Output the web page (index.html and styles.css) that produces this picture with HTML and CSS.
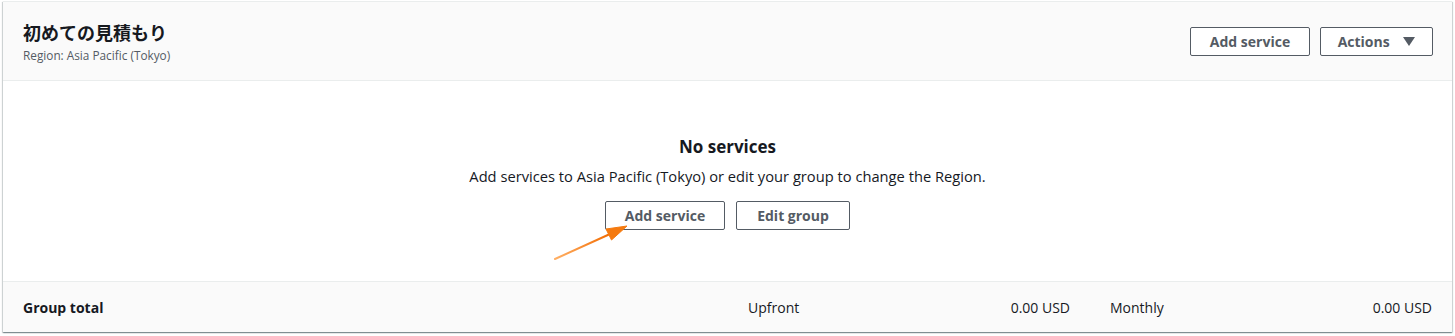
FILE: index.html
```html
<!DOCTYPE html>
<html lang="ja">
<head>
	<meta charset="UTF-8">
	<title>初めての見積もり</title>
	<link rel="stylesheet" href="styles.css">
</head>
<body>
	<section class="group">
		<div class="group-head">
			<div class="head-txt">
				<h2>初めての見積もり</h2>
				<p>Region: Asia Pacific (Tokyo)</p>
			</div>
			<div class="head-btns">
				<button class="btn">Add service</button>
				<button class="btn btn-drop">Actions <span class="caret"></span></button>
			</div>
		</div>
		<div class="group-body">
			<h3>No services</h3>
			<p>Add services to Asia Pacific (Tokyo) or edit your group to change the Region.</p>
			<div class="body-btns">
				<button class="btn">Add service</button>
				<button class="btn">Edit group</button>
			</div>
			<svg class="arrow" width="90" height="50" viewBox="0 0 90 50">
				<defs>
					<linearGradient id="ag" x1="0" y1="1" x2="1" y2="0">
						<stop offset="0" stop-color="#ffb066"/>
						<stop offset="1" stop-color="#f26b00"/>
					</linearGradient>
				</defs>
				<path d="M6 40 L61 15" stroke="url(#ag)" stroke-width="2" stroke-linecap="round" fill="none"/>
				<path d="M78 7 L57 10 L62.5 21 Z" fill="#f57a0f" stroke="#f57a0f" stroke-width="1" stroke-linejoin="round"/>
			</svg>
		</div>
		<div class="group-foot">
			<div class="foot-name">Group total</div>
			<div class="foot-col"><span>Upfront</span><span>0.00 USD</span></div>
			<div class="foot-col"><span>Monthly</span><span>0.00 USD</span></div>
		</div>
	</section>
</body>
</html>
```

FILE: styles.css
```css
body{
	margin:0;
	padding:1px 3px 3px 3px;
	background:#fff;
	font-family:"Open Sans","Noto Sans CJK JP",sans-serif;
	color:#16191f;
}
h2,h3,p{
	margin:0;
}
.group{
	background:#fff;
	box-shadow:0 1px 1px 0 rgba(0,28,36,.3),1px 1px 1px 0 rgba(0,28,36,.15),-1px 1px 1px 0 rgba(0,28,36,.15);
	border-top:1px solid #eaeded;
}
.group-head{
	display:flex;
	justify-content:space-between;
	align-items:center;
	height:78px;
	padding:0 19px 0 20px;
	background:#fafafa;
	border-bottom:1px solid #eaeded;
}
.head-txt h2{
	font-family:"Noto Sans CJK JP",sans-serif;
	font-size:18px;
	font-weight:700;
	line-height:24px;
	color:#16191f;
}
.head-txt p{
	margin-top:3px;
	font-size:11.8px;
	line-height:16px;
	color:#545b64;
}
.head-btns{
	display:flex;
	gap:10px;
	margin-top:1px;
}
.btn{
	height:29px;
	padding:0;
	border:1px solid #545b64;
	border-radius:2px;
	background:#fff;
	font-family:"Open Sans",sans-serif;
	font-size:14px;
	font-weight:700;
	color:#545b64;
	white-space:nowrap;
	cursor:pointer;
}
.head-btns .btn{
	width:120px;
}
.head-btns .btn-drop{
	width:113px;
}
.caret{
	display:inline-block;
	margin-left:10px;
	width:0;
	height:0;
	border-left:6px solid transparent;
	border-right:6px solid transparent;
	border-top:9px solid #545b64;
	vertical-align:1px;
}
.group-body{
	position:relative;
	height:200px;
	text-align:center;
	border-bottom:1px solid #eaeded;
}
.group-body h3{
	padding-top:55px;
	font-size:17px;
	font-weight:700;
	line-height:22px;
}
.group-body p{
	margin-top:8px;
	font-size:14.7px;
	line-height:20px;
}
.body-btns{
	display:flex;
	justify-content:center;
	gap:11px;
	margin-top:15px;
}
.body-btns .btn:first-child{
	width:120px;
}
.body-btns .btn:last-child{
	width:114px;
}
.arrow{
	position:absolute;
	left:546px;
	top:138px;
}
.group-foot{
	display:grid;
	grid-template-columns:1fr 322px 322px;
	column-gap:40px;
	align-items:center;
	height:50px;
	padding:0 20px;
	background:#fafafa;
	font-size:14px;
}
.foot-name{
	font-weight:700;
}
.foot-col{
	display:flex;
	justify-content:space-between;
}
```
